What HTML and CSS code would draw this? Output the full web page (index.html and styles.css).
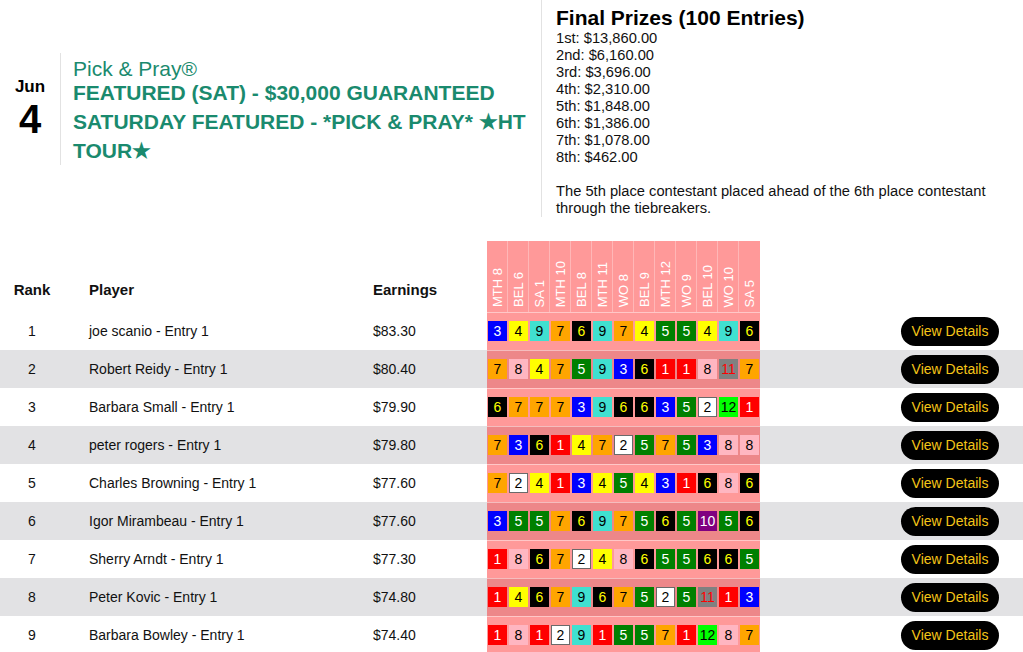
FILE: index.html
```html
<!DOCTYPE html>
<html lang="en">
<head>
<meta charset="utf-8">
<title>Pick &amp; Pray Results</title>
<link rel="stylesheet" href="styles.css">
</head>
<body>
<header class="top">
  <div class="event">
    <div class="date">
      <div class="month">Jun</div>
      <div class="day">4</div>
    </div>
    <div class="title">
      <div class="brand">Pick &amp; Pray®</div>
      <h1 class="name">FEATURED (SAT) - $30,000 GUARANTEED SATURDAY FEATURED - *PICK &amp; PRAY* ★HT TOUR★</h1>
    </div>
  </div>
  <div class="prizes">
    <h2 class="prizes-title">Final Prizes (100 Entries)</h2>
    <div class="prize-list">
      <div>1st: $13,860.00</div>
      <div>2nd: $6,160.00</div>
      <div>3rd: $3,696.00</div>
      <div>4th: $2,310.00</div>
      <div>5th: $1,848.00</div>
      <div>6th: $1,386.00</div>
      <div>7th: $1,078.00</div>
      <div>8th: $462.00</div>
    </div>
    <p class="note">The 5th place contestant placed ahead of the 6th place contestant through the tiebreakers.</p>
  </div>
</header>

<table class="standings">
  <colgroup>
    <col class="c-rank"><col class="c-player"><col class="c-earn"><col class="c-grid"><col class="c-act">
  </colgroup>
  <thead>
    <tr>
      <th class="h-rank">Rank</th>
      <th class="h-player">Player</th>
      <th class="h-earn">Earnings</th>
      <th class="h-grid">
        <div class="races">
          <span class="race"><span class="race-label">MTH 8</span></span>
          <span class="race"><span class="race-label">BEL 6</span></span>
          <span class="race"><span class="race-label">SA 1</span></span>
          <span class="race"><span class="race-label">MTH 10</span></span>
          <span class="race"><span class="race-label">BEL 8</span></span>
          <span class="race"><span class="race-label">MTH 11</span></span>
          <span class="race"><span class="race-label">WO 8</span></span>
          <span class="race"><span class="race-label">BEL 9</span></span>
          <span class="race"><span class="race-label">MTH 12</span></span>
          <span class="race"><span class="race-label">WO 9</span></span>
          <span class="race"><span class="race-label">BEL 10</span></span>
          <span class="race"><span class="race-label">WO 10</span></span>
          <span class="race"><span class="race-label">SA 5</span></span>
        </div>
      </th>
      <th class="h-act"></th>
    </tr>
  </thead>
  <tbody id="rows"></tbody>
</table>
<script src="app.js"></script>
</body>
</html>
```

FILE: app.js
```js
var data = [
  [1, "joe scanio - Entry 1", "$83.30", [3,4,9,7,6,9,7,4,5,5,4,9,6]],
  [2, "Robert Reidy - Entry 1", "$80.40", [7,8,4,7,5,9,3,6,1,1,8,11,7]],
  [3, "Barbara Small - Entry 1", "$79.90", [6,7,7,7,3,9,6,6,3,5,2,12,1]],
  [4, "peter rogers - Entry 1", "$79.80", [7,3,6,1,4,7,2,5,7,5,3,8,8]],
  [5, "Charles Browning - Entry 1", "$77.60", [7,2,4,1,3,4,5,4,3,1,6,8,6]],
  [6, "Igor Mirambeau - Entry 1", "$77.60", [3,5,5,7,6,9,7,5,6,5,10,5,6]],
  [7, "Sherry Arndt - Entry 1", "$77.30", [1,8,6,7,2,4,8,6,5,5,6,6,5]],
  [8, "Peter Kovic - Entry 1", "$74.80", [1,4,6,7,9,6,7,5,2,5,11,1,3]],
  [9, "Barbara Bowley - Entry 1", "$74.40", [1,8,1,2,9,1,5,5,7,1,12,8,7]]
];
var tbody = document.getElementById("rows");
data.forEach(function (r) {
  var tr = document.createElement("tr");
  var picks = r[3].map(function (n) {
    return '<span class="pick p' + n + '">' + n + '</span>';
  }).join("");
  tr.innerHTML =
    '<td class="rank">' + r[0] + '</td>' +
    '<td class="player">' + r[1] + '</td>' +
    '<td class="earn">' + r[2] + '</td>' +
    '<td class="grid"><div class="picks">' + picks + '</div></td>' +
    '<td class="act"><button class="details">View Details</button></td>';
  tbody.appendChild(tr);
});
```

FILE: styles.css
```css
* { box-sizing: border-box; }

body {
  margin: 0;
  font-family: "Liberation Sans", Arial, sans-serif;
  color: #111;
  background: #fff;
}

/* ---------- top header ---------- */
.top {
  display: flex;
  align-items: center;
}

.event {
  flex: 0 0 541px;
  display: flex;
  align-items: center;
}

.date {
  flex: 0 0 60px;
  text-align: center;
  color: #000;
  font-weight: bold;
}
.month { font-size: 17px; line-height: 20px; }
.day { font-size: 40px; line-height: 44px; }

.title {
  flex: 1;
  border-left: 1px solid #e2e2e2;
  padding: 6px 0 0 12px;
  color: #1a8a6e;
}
.brand {
  font-size: 21px;
  line-height: 19px;
}
.name {
  margin: 0;
  font-size: 21px;
  line-height: 29px;
  font-weight: bold;
}

.prizes {
  flex: 1;
  border-left: 1px solid #e2e2e2;
  padding: 6px 20px 0 14px;
  font-size: 14.7px;
  line-height: 17px;
  color: #111;
}
.prizes-title {
  margin: 0;
  font-size: 21px;
  line-height: 24px;
  font-weight: bold;
  color: #000;
}
.prize-list { margin-bottom: 17px; }
.note { margin: 0; }

/* ---------- standings table ---------- */
.standings {
  margin-top: 24px;
  width: 100%;
  border-collapse: collapse;
  table-layout: fixed;
  font-size: 14px;
}
.c-rank { width: 64px; }
.c-player { width: 296px; }
.c-earn { width: 127px; }
.c-grid { width: 273px; }
.c-act { width: auto; }

.standings th {
  height: 71px;
  padding: 0 0 13px;
  vertical-align: bottom;
  text-align: left;
  font-size: 15px;
  line-height: 18px;
  font-weight: bold;
  color: #111;
}
.standings th.h-rank { text-align: center; }
.standings th.h-player { padding-left: 25px; }
.standings th.h-earn { padding-left: 13px; }
.standings th.h-grid {
  padding: 0;
  background: #ff9999;
}

.races {
  display: flex;
  height: 71px;
}
.race {
  flex: 0 0 21px;
  display: flex;
  align-items: flex-end;
  justify-content: center;
  padding-bottom: 5px;
  border-right: 1px solid rgba(255, 255, 255, 0.3);
}
.race:last-child { border-right: none; }
.race-label {
  writing-mode: vertical-rl;
  transform: rotate(180deg);
  color: #fff;
  font-size: 13px;
  font-weight: normal;
  line-height: 15px;
  white-space: nowrap;
}

.standings tbody tr:nth-child(even) { background: #e2e2e4; }

.standings td {
  height: 38px;
  padding: 0;
  vertical-align: middle;
  color: #111;
}
.rank { text-align: center; }
.player { padding-left: 25px !important; }
.earn { padding-left: 13px !important; }

.grid {
  background: rgba(255, 0, 0, 0.4);
  box-shadow: inset 0 1px 0 rgba(255, 255, 255, 0.45);
}
.picks {
  display: flex;
  padding-left: 1px;
}
.pick {
  flex: 0 0 19px;
  height: 20px;
  margin-right: 2px;
  display: flex;
  align-items: center;
  justify-content: center;
  font-size: 14px;
  line-height: 1;
  border: 1px solid transparent;
}
.p1 { background: #ff0000; color: #fff; }
.p2 { background: #fff; color: #000; border-color: #6a6a6a; }
.p3 { background: #0000ff; color: #fff; }
.p4 { background: #ffff00; color: #000; }
.p5 { background: #008000; color: #fff; }
.p6 { background: #000; color: #ffff00; }
.p7 { background: #ffa500; color: #000; }
.p8 { background: #ffb6c1; color: #000; }
.p9 { background: #40e0d0; color: #000; }
.p10 { background: #800080; color: #fff; }
.p11 { background: #808080; color: #ff0000; }
.p12 { background: #00ff00; color: #000; }

.act {
  text-align: right;
  padding-right: 24px !important;
}
.details {
  height: 29px;
  width: 98px;
  padding: 0;
  border: none;
  border-radius: 15px;
  background: #000;
  color: #f5c518;
  font-family: "Liberation Sans", Arial, sans-serif;
  font-size: 14px;
  cursor: pointer;
}
```
